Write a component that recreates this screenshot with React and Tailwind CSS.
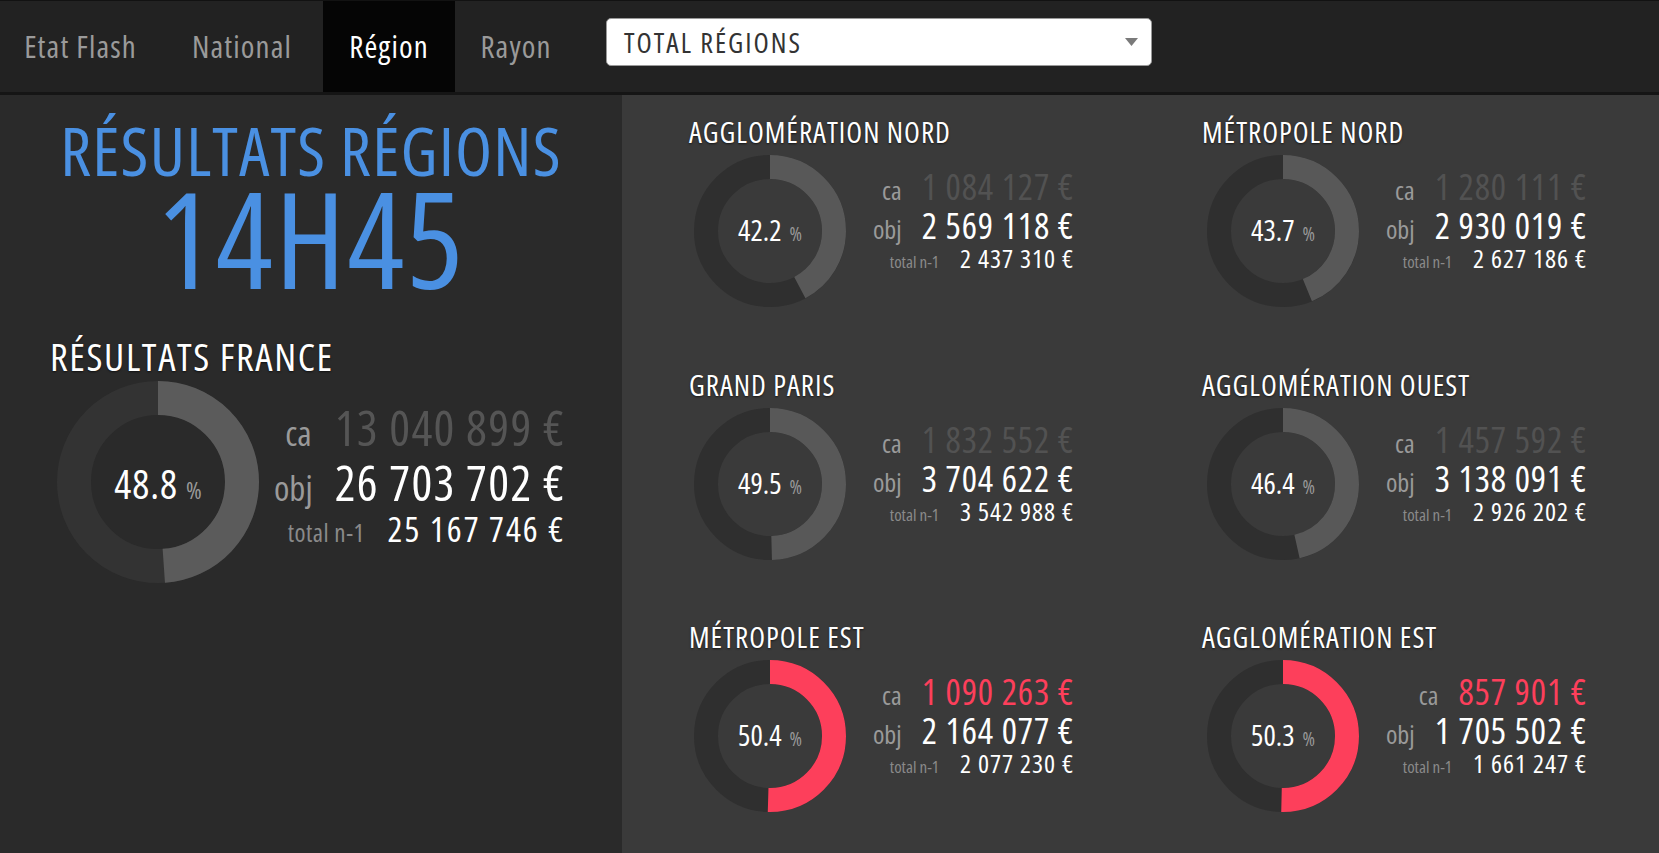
import React from "react";

const tabs = [
  { label: "Etat Flash", w: "w-[161px]" },
  { label: "National", w: "w-[162px]" },
  { label: "Région", w: "w-[132px]", active: true },
  { label: "Rayon", w: "w-[122px]" },
];

const regions = [
  { name: "AGGLOMÉRATION NORD", pct: 42.2, ca: "1 084 127 €", obj: "2 569 118 €", n1: "2 437 310 €" },
  { name: "MÉTROPOLE NORD", pct: 43.7, ca: "1 280 111 €", obj: "2 930 019 €", n1: "2 627 186 €" },
  { name: "GRAND PARIS", pct: 49.5, ca: "1 832 552 €", obj: "3 704 622 €", n1: "3 542 988 €" },
  { name: "AGGLOMÉRATION OUEST", pct: 46.4, ca: "1 457 592 €", obj: "3 138 091 €", n1: "2 926 202 €" },
  { name: "MÉTROPOLE EST", pct: 50.4, ca: "1 090 263 €", obj: "2 164 077 €", n1: "2 077 230 €" },
  { name: "AGGLOMÉRATION EST", pct: 50.3, ca: "857 901 €", obj: "1 705 502 €", n1: "1 661 247 €" },
];

const Donut = ({ size, width, pct, track, fill }) => {
  const r = (size - width) / 2;
  const c = 2 * Math.PI * r;
  return (
    <svg width={size} height={size} viewBox={`0 0 ${size} ${size}`} className="block -rotate-90">
      <circle cx={size / 2} cy={size / 2} r={r} fill="none" stroke={track} strokeWidth={width} />
      <circle
        cx={size / 2}
        cy={size / 2}
        r={r}
        fill="none"
        stroke={fill}
        strokeWidth={width}
        strokeDasharray={`${(c * pct) / 100} ${c}`}
      />
    </svg>
  );
};

const RegionCard = ({ region }) => {
  const over = region.pct >= 50;
  return (
    <div className="pt-[22px]">
      <h2 className="text-[29px] leading-none text-white whitespace-nowrap tracking-[1px] [text-shadow:0_1px_2px_rgba(0,0,0,0.6)]">
        {region.name}
      </h2>
      <div className="flex w-[385px] mt-[9px]">
        <div className="relative ml-[5px] shrink-0">
          <Donut size={152} width={24} pct={region.pct} track="#2f2f2f" fill={over ? "#fd3f5b" : "#585858"} />
          <div className="absolute inset-0 flex items-baseline justify-center pt-[60px]">
            <span className="text-[29px] text-white leading-none">{region.pct}</span>
            <span className="text-[19px] text-[#9a9a9a] leading-none ml-[8px]">%</span>
          </div>
        </div>
        <div className="flex-1 flex flex-col items-end mt-[14px] leading-none whitespace-nowrap">
          <div className="flex items-baseline gap-[20px]">
            <span className="text-[26px] text-[#9a9a9a]">ca</span>
            <span className={`text-[36px] tracking-[0.9px] ${over ? "text-[#fd3f5b]" : "text-[#525252]"}`}>
              {region.ca}
            </span>
          </div>
          <div className="flex items-baseline gap-[20px] mt-[3px]">
            <span className="text-[26px] text-[#9a9a9a]">obj</span>
            <span className="text-[36px] tracking-[0.9px] text-white">{region.obj}</span>
          </div>
          <div className="flex items-baseline gap-[21px] mt-[1px]">
            <span className="text-[17px] text-[#8a8a8a]">total n-1</span>
            <span className="text-[26px] tracking-[1px] text-white">{region.n1}</span>
          </div>
        </div>
      </div>
    </div>
  );
};

export default function App() {
  return (
    <div className="w-[1659px] h-[853px] flex flex-col bg-[#2a2a2a] font-['Open_Sans',sans-serif] font-stretch-condensed overflow-hidden">
      {/* top bar */}
      <div className="h-[95px] shrink-0 flex items-stretch bg-[#222222] border-t border-[#121212] border-b-[3px] border-b-[#151515]">
        {tabs.map((t) => (
          <div
            key={t.label}
            className={`${t.w} flex items-center justify-center text-[31px] tracking-[1.1px] ${
              t.active ? "bg-[#050505] text-white" : "text-[#9a9a9a]"
            }`}
          >
            {t.label}
          </div>
        ))}
        <div className="self-start mt-[17px] ml-[29px] w-[546px] h-[48px] bg-white rounded-[5px] border border-[#999] flex items-center justify-between pl-[17px] pr-[13px]">
          <span className="text-[28px] tracking-[2px] text-[#333333]">TOTAL RÉGIONS</span>
          <svg width="13" height="8" viewBox="0 0 13 8">
            <path d="M0 0 L13 0 L6.5 8 Z" fill="#7a7a7a" />
          </svg>
        </div>
      </div>

      <div className="flex-1 flex">
        {/* left panel */}
        <div className="w-[622px] shrink-0 bg-[#2a2a2a] pt-[21px]">
          <div className="text-center text-[#4a90e2] whitespace-nowrap">
            <div className="text-[68px] leading-none tracking-[1.2px]">RÉSULTATS RÉGIONS</div>
            <div className="text-[134px] leading-none -mt-[14px] tracking-[2px]">14H45</div>
          </div>
          <h2 className="mt-[32px] ml-[50px] text-[39px] leading-none text-white tracking-[1.6px] [text-shadow:0_1px_2px_rgba(0,0,0,0.6)]">
            RÉSULTATS FRANCE
          </h2>
          <div className="flex mt-[6px] ml-[57px] w-[508px]">
            <div className="relative shrink-0">
              <Donut size={202} width={34} pct={48.8} track="#333333" fill="#5b5b5b" />
              <div className="absolute inset-0 flex items-baseline justify-center pt-[83px]">
                <span className="text-[40px] tracking-[1px] text-white leading-none">48.8</span>
                <span className="text-[24px] text-[#9a9a9a] leading-none ml-[8px]">%</span>
              </div>
            </div>
            <div className="flex-1 flex flex-col items-end mt-[22px] leading-none whitespace-nowrap">
              <div className="flex items-baseline gap-[23px]">
                <span className="text-[35px] text-[#9a9a9a]">ca</span>
                <span className="text-[49px] tracking-[1.3px] text-[#555555]">13 040 899 €</span>
              </div>
              <div className="flex items-baseline gap-[22px] mt-[6px]">
                <span className="text-[35px] text-[#9a9a9a]">obj</span>
                <span className="text-[49px] tracking-[1.3px] text-white">26 703 702 €</span>
              </div>
              <div className="flex items-baseline gap-[23px] mt-[4px]">
                <span className="text-[25px] tracking-[0.5px] text-[#8a8a8a]">total n-1</span>
                <span className="text-[35px] tracking-[2px] text-white">25 167 746 €</span>
              </div>
            </div>
          </div>
        </div>

        {/* right panel */}
        <div className="flex-1 bg-[#3a3a3a] grid grid-cols-[513px_1fr] grid-rows-3 pl-[67px]">
          {regions.map((r) => (
            <RegionCard key={r.name} region={r} />
          ))}
        </div>
      </div>
    </div>
  );
}
